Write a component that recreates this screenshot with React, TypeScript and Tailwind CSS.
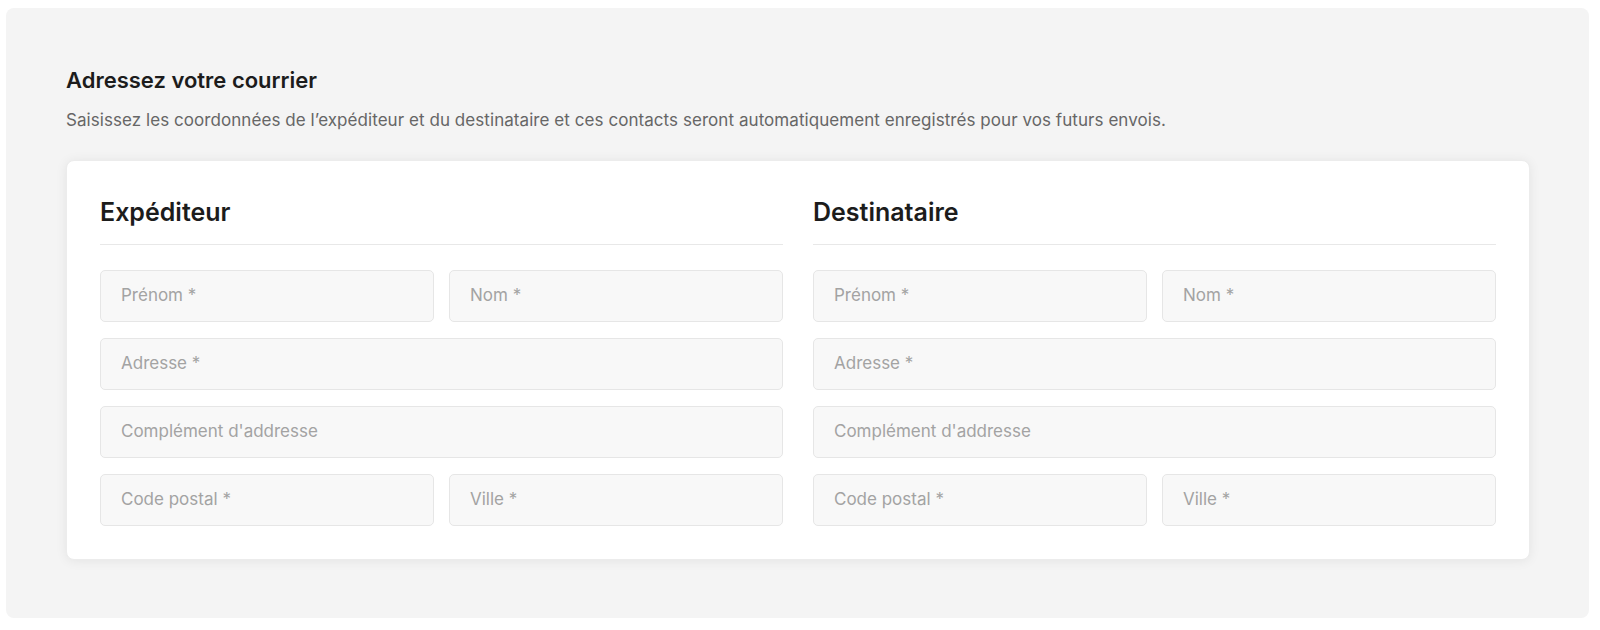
import React from "react";

function Field({ label }: { label: string }) {
  return (
    <div className="h-[52px] rounded-[5px] border border-[#e6e6e6] bg-[#f8f8f8] pl-5 flex items-center text-[17px] text-[#a3a3a3]">
      {label}
    </div>
  );
}

function Column({ title }: { title: string }) {
  return (
    <div className="flex flex-col">
      <h2 className="text-[25px] leading-[32px] font-semibold text-[#1c1c1c] pb-4 border-b border-[#e8e8e8]">
        {title}
      </h2>
      <div className="mt-[25px] flex flex-col gap-4">
        <div className="grid grid-cols-2 gap-[15px]">
          <Field label="Prénom *" />
          <Field label="Nom *" />
        </div>
        <Field label="Adresse *" />
        <Field label="Complément d'addresse" />
        <div className="grid grid-cols-2 gap-[15px]">
          <Field label="Code postal *" />
          <Field label="Ville *" />
        </div>
      </div>
    </div>
  );
}

export default function App() {
  return (
    <div className="w-[1600px] h-[630px] bg-white pt-[8px] pl-[6px]" style={{ fontFamily: "Inter, 'Noto Sans', sans-serif" }}>
      <div className="w-[1583px] h-[610px] rounded-[8px] bg-[#f4f4f4] pt-[58px] pl-[60px] pr-[59px]">
        <h1 className="text-[22px] leading-[28px] font-semibold text-[#1c1c1c]">Adressez votre courrier</h1>
        <p className="mt-[14px] text-[17px] leading-[24px] tracking-[0.06px] text-[#666666]">
          Saisissez les coordonnées de l’expéditeur et du destinataire et ces contacts seront automatiquement enregistrés pour vos futurs envois.
        </p>
        <div className="mt-[28px] rounded-[8px] bg-white border border-[#ececec] shadow-[0_1px_12px_rgba(0,0,0,0.07)] px-[33px] pt-[35px] pb-[33px] grid grid-cols-2 gap-[30px]">
          <Column title="Expéditeur" />
          <Column title="Destinataire" />
        </div>
      </div>
    </div>
  );
}
